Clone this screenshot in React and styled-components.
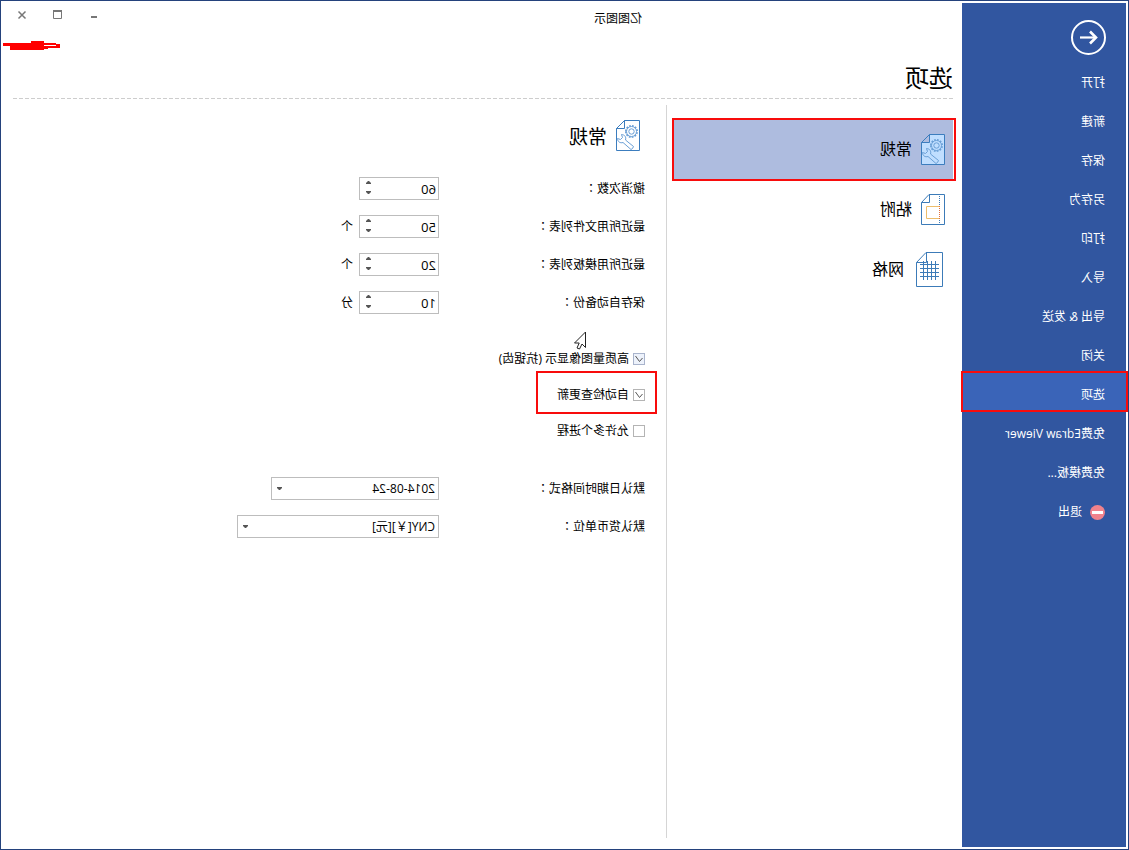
import React from "react";
import styled, { createGlobalStyle, css } from "styled-components";

const Global = createGlobalStyle`
  *, *::before, *::after { box-sizing: border-box; }
  body {
    margin: 0;
    background: #fff;
    color: #000;
    font-family: "Open Sans", "Noto Sans CJK SC", sans-serif;
    font-size: 12px;
    line-height: 16px;
  }
  button, input, select { font: inherit; color: inherit; margin: 0; }
  h1, h2 { margin: 0; font-weight: 400; }
`;

/* The whole window is shown as in a mirror. */
const Frame = styled.div`
  display: flex;
  min-height: 100vh;
  padding: 2px;
  border: 1px solid #24427c;
  background: #fff;
  transform: scaleX(-1);
`;

const redFrame = css`
  position: relative;
  &::after {
    content: "";
    position: absolute;
    border: 2px solid #f80c0c;
    pointer-events: none;
  }
`;

const Sidebar = styled.nav`
  flex: 0 0 164px;
  background: #3156a0;
  color: #fff;
`;

const BackButton = styled.button`
  display: block;
  width: 35px;
  height: 35px;
  margin: 17px 20px 5px;
  padding: 0;
  border: 0;
  background: none;
  color: #fff;
  svg { display: block; }
`;

const MenuItem = styled.button`
  display: flex;
  align-items: center;
  gap: 8px;
  width: 100%;
  height: 39px;
  padding: 7px 0 0 21px;
  border: 0;
  background: ${(p) => (p.$active ? "#3a64b8" : "transparent")};
  text-align: left;
  white-space: nowrap;
  ${(p) => p.$active && redFrame}
  &::after { inset: -1px -1px -1px -2px; }
`;

const Main = styled.main`
  flex: 1;
  min-width: 0;
  display: flex;
  flex-direction: column;
`;

const TitleBar = styled.header`
  display: flex;
  height: 32px;
`;

const WindowTitle = styled.div`
  flex: 1;
  padding: 8px 162px 0 0;
  text-align: center;
`;

const WindowButton = styled.button`
  width: 36px;
  height: 24px;
  padding: 0;
  border: 0;
  background: none;
  color: #777;
  svg { display: block; margin: auto; }
`;

const WindowButtons = styled.div`
  display: flex;
  margin-right: 1px;
`;

const Account = styled.div`
  display: flex;
  justify-content: flex-end;
  height: 20px;
  padding-top: 4px;
`;

const PageTitle = styled.h1`
  height: 43px;
  margin: 0 10px 0 9px;
  padding-top: 7px;
  font-size: 24px;
  line-height: 32px;
`;

const Dashes = styled.div`
  height: 1px;
  margin: 0 10px 0 9px;
  background: repeating-linear-gradient(to right, #cdcdcd 0 4px, transparent 4px 6px);
`;

const Body = styled.div`
  flex: 1;
  display: flex;
  padding: 6px 0 9px;
`;

const Categories = styled.div`
  flex: 0 0 296px;
  padding: 14px 5px 0 9px;
  border-right: 1px solid #d5d5d5;
`;

const Category = styled.button`
  display: flex;
  align-items: center;
  gap: 9px;
  width: 100%;
  height: 60px;
  padding: 0 0 0 8px;
  border: 0;
  background: ${(p) => (p.$active ? "#aebcdf" : "transparent")};
  font-size: 16px;
  line-height: 24px;
  svg { flex: none; }
  ${(p) => p.$active && redFrame}
  &::after { inset: -1px 0 -2px -3px; }
`;

const Panel = styled.section`
  flex: 1;
  padding: 14px 20px 0 21px;
`;

const PanelHeader = styled.div`
  display: flex;
  align-items: center;
  gap: 9px;
  height: 33px;
  padding-left: 5px;
  h2 {
    padding-top: 2px;
    font-size: 19px;
    line-height: 28px;
  }
`;

const Fields = styled.div`
  display: flex;
  flex-direction: column;
  gap: 15px;
  margin-top: ${(p) => p.$top};
`;

const Field = styled.div`
  display: flex;
  align-items: center;
  height: 23px;
  label { width: 206px; }
`;

/* The colon stands in the middle of its square. */
const Colon = styled.span`
  font-family: "Noto Sans CJK TC", sans-serif;
  line-height: 12px;
`;

const NumberBox = styled.span`
  display: flex;
  width: 80px;
  height: 23px;
  margin-right: 6px;
  border: 1px solid #bdbdbd;
  input {
    flex: 1;
    min-width: 0;
    padding: 0 2px;
    border: 0;
    outline: 0;
    background: none;
    appearance: textfield;
    font-size: 13px;
  }
  input::-webkit-inner-spin-button { appearance: none; }
`;

const Spinner = styled.span`
  display: flex;
  flex-direction: column;
  width: 18px;
  padding: 0 0 2px;
`;

const SpinButton = styled.button`
  flex: 1;
  display: flex;
  align-items: center;
  justify-content: center;
  padding: 0;
  border: 0;
  background: none;
`;

const SelectBox = styled.span`
  position: relative;
  width: ${(p) => p.$width};
  select {
    display: block;
    width: 100%;
    height: 23px;
    padding: 0 20px 0 3px;
    border: 1px solid #bdbdbd;
    border-radius: 0;
    outline: 0;
    background: #fff;
    appearance: none;
  }
  svg {
    position: absolute;
    right: 6px;
    top: 10px;
    pointer-events: none;
  }
`;

const Checks = styled.div`
  position: relative;
  display: flex;
  flex-direction: column;
  align-items: flex-start;
  gap: 20px;
  margin-top: 37px;
`;

const Check = styled.label`
  display: flex;
  align-items: center;
  gap: 4px;
  height: 16px;
  ${(p) => p.$marked && redFrame}
  &::after { inset: -16px -21px -11px -12px; }
`;

const Tick = styled.span`
  position: relative;
  width: 12px;
  height: 12px;
  input {
    display: block;
    width: 12px;
    height: 12px;
    border: 1px solid ${(p) => (p.$hot ? "#a9b4cc" : "#b4b4b4")};
    background: ${(p) => (p.$hot ? "#edf2fb" : "#fff")};
    appearance: none;
  }
  svg {
    position: absolute;
    inset: 0;
    pointer-events: none;
    visibility: hidden;
  }
  input:checked + svg { visibility: visible; }
`;

const Pointer = styled.svg`
  position: absolute;
  left: 59px;
  top: -20px;
`;

const GearDoc = ({ fill, corner }) => (
  <svg width="24" height="31" viewBox="0 0 24 31" fill="none" stroke="#3c7dbe">
    <path d="M.5.5H15.500L23.500 8.500V30.500H.500Z" fill={fill} />
    <path d="M15.500.5V8.500H23.500Z" fill={corner} />
    <g stroke="#6a9fd6">
      <circle cx="8.500" cy="11.500" r="5.800" strokeWidth="1.400" strokeDasharray="1.800 1.240" />
      <circle cx="8.500" cy="11.500" r="5" />
      <circle cx="8.500" cy="11.500" r="2.700" />
      <path d="M7.500 28.500 6.500 26.500 14.500 20C13.500 17 15.500 14.500 18.500 14.500L17.500 17.500 19.500 19.500 22.500 18.500C22.500 21.500 20 23.500 17 22.500L9 29.500Z" />
    </g>
  </svg>
);

const SnapDoc = () => (
  <svg width="24" height="31" viewBox="0 0 24 31" fill="none" stroke="#3c7bb8">
    <path d="M.5.5H16L23.500 8.500V30.500H.500ZM15.500.5V8.500H23.500" />
    <path d="M5.500 2V29" strokeDasharray="1 1" />
    <path d="M5.500 12.500H18.500V24.500H5.500" stroke="#edbe6c" />
    <path d="M5.500 12V25" stroke="#e0703c" strokeDasharray="1 1" />
  </svg>
);

const GridDoc = () => (
  <svg width="32" height="35" viewBox="0 0 32 35" fill="none" stroke="#3c7bb8">
    <path d="M2.500.5H19L28.500 10.500V34.500H2.500ZM18.500.5V10.500H28.500" />
    <path d="M6 12.500H25M6 16.500H25M6 20.500H25M6 24.500H25M9.500 9V28M13.500 9V28M17.500 9V28M21.500 9V28" />
  </svg>
);

const Caret = ({ up }) => (
  <svg width="5" height="3" viewBox="0 0 5 3" fill="#555">
    <path d={up ? "M0 3V2L2 0H3L5 2V3Z" : "M0 0H5V1L3 3H2L0 1Z"} />
  </svg>
);

const ExitIcon = () => (
  <svg width="15" height="15" viewBox="0 0 15 15">
    <circle cx="7.500" cy="7.500" r="7.500" fill="#f0828c" />
    <rect x="2" y="6" width="11" height="3" fill="#fff" />
  </svg>
);

const menu = [
  "打开", "新建", "保存", "另存为", "打印", "导入", "导出 & 发送",
  "关闭", "选项", "免费Edraw Viewer", "免费模板...", "退出",
];

const categories = [
  ["常规", <GearDoc fill="#c0deff" corner="#aebcdf" />],
  ["粘附", <SnapDoc />],
  ["网格", <GridDoc />],
];

const numbers = [
  ["undo", "撤消次数", 60, ""],
  ["files", "最近所用文件列表", 50, "个"],
  ["templates", "最近所用模板列表", 20, "个"],
  ["backup", "保存自动备份", 10, "分"],
];

const checks = [
  ["高质量图像显示 (抗锯齿)", true],
  ["自动检查更新", true],
  ["允许多个进程", false],
];

const selects = [
  ["date", "默认日期时间格式", "2014-08-24", "168px"],
  ["currency", "默认货币单位", "CNY[￥][元]", "202px"],
];

const FieldLabel = ({ id, children }) => (
  <label htmlFor={id}>{children}<Colon lang="zh-TW">：</Colon></label>
);

function NumberField({ id, label, initial, unit }) {
  const [value, setValue] = React.useState(initial);
  return (
    <Field>
      <FieldLabel id={id}>{label}</FieldLabel>
      <NumberBox>
        <input id={id} type="number" value={value} onChange={(e) => setValue(Number(e.target.value))} />
        <Spinner>
          <SpinButton aria-label="+" onClick={() => setValue(value + 1)}><Caret up /></SpinButton>
          <SpinButton aria-label="-" onClick={() => setValue(value - 1)}><Caret /></SpinButton>
        </Spinner>
      </NumberBox>
      {unit}
    </Field>
  );
}

export default function App() {
  return (
    <>
      <Global />
      <Frame lang="zh-CN">
        <Sidebar>
          <BackButton aria-label="返回">
            <svg width="35" height="35" viewBox="0 0 35 35" fill="none" stroke="currentColor">
              <circle cx="17.500" cy="17.500" r="16.500" strokeWidth="2" />
              <path d="M10 17.500H26" strokeWidth="2.200" />
              <path d="M16 11.500 10 17.500 16 23.500" strokeWidth="2.600" />
            </svg>
          </BackButton>
          {menu.map((text) => (
            <MenuItem key={text} $active={text === "选项"}>
              {text === "退出" && <ExitIcon />}
              {text}
            </MenuItem>
          ))}
        </Sidebar>
        <Main>
          <TitleBar>
            <WindowTitle>亿图图示</WindowTitle>
            <WindowButtons>
              <WindowButton aria-label="最小化">
                <svg width="10" height="10" viewBox="0 0 10 10"><rect x="2" y="6" width="6" height="2" fill="currentColor" /></svg>
              </WindowButton>
              <WindowButton aria-label="最大化">
                <svg width="10" height="10" viewBox="0 0 10 10" fill="none" stroke="currentColor"><path d="M1.500 1.500H9.500V8.500H1.500Z" /><path d="M1 1H10" strokeWidth="2" /></svg>
              </WindowButton>
              <WindowButton aria-label="关闭">
                <svg width="10" height="10" viewBox="0 0 10 10" fill="none" stroke="currentColor" strokeWidth="1.500"><path d="M1.500 1.500 8.500 8.500M8.500 1.500 1.500 8.500" /></svg>
              </WindowButton>
            </WindowButtons>
          </TitleBar>
          <Account>
            <svg width="60" height="12" viewBox="0 0 60 12">
              <path d="M33 8 39 6 42 8Z" fill="#22f" />
              <path d="M48 6H51V9H48Z" fill="#246" />
              <path d="M3 5H7V4H19V2H32V4H60V7H53V8H53V11H19V10H15V9H3ZM7 6V7H19V6Z" fill="#f00" fillRule="evenodd" />
            </svg>
          </Account>
          <PageTitle>选项</PageTitle>
          <Dashes />
          <Body>
            <Categories>
              {categories.map(([text, icon], i) => (
                <Category key={text} $active={i === 0}>{icon}{text}</Category>
              ))}
            </Categories>
            <Panel>
              <PanelHeader><GearDoc fill="none" corner="none" /><h2>常规</h2></PanelHeader>
              <Fields $top="25px">
                {numbers.map(([id, label, value, unit]) => (
                  <NumberField key={id} id={id} label={label} initial={value} unit={unit} />
                ))}
              </Fields>
              <Checks>
                {checks.map(([text, on], i) => (
                  <Check key={text} $marked={i === 1}>
                    <Tick $hot={i === 0}>
                      <input type="checkbox" defaultChecked={on} />
                      <svg width="12" height="12" viewBox="0 0 12 12" fill="none" stroke="#555"><path d="M2.500 5 5.500 8.500 9.500 3" /></svg>
                    </Tick>
                    {text}
                  </Check>
                ))}
                <Pointer width="12" height="19" viewBox="0 0 12 19" fill="#fff" stroke="#222">
                  <path d="M.5 1V16.500L4 13 6.500 18 9 17 6.800 12H11.500Z" />
                </Pointer>
              </Checks>
              <Fields $top="38px">
                {selects.map(([id, label, value, width]) => (
                  <Field key={id}>
                    <FieldLabel id={id}>{label}</FieldLabel>
                    <SelectBox $width={width}>
                      <select id={id} defaultValue={value}><option>{value}</option></select>
                      <Caret />
                    </SelectBox>
                  </Field>
                ))}
              </Fields>
            </Panel>
          </Body>
        </Main>
      </Frame>
    </>
  );
}
